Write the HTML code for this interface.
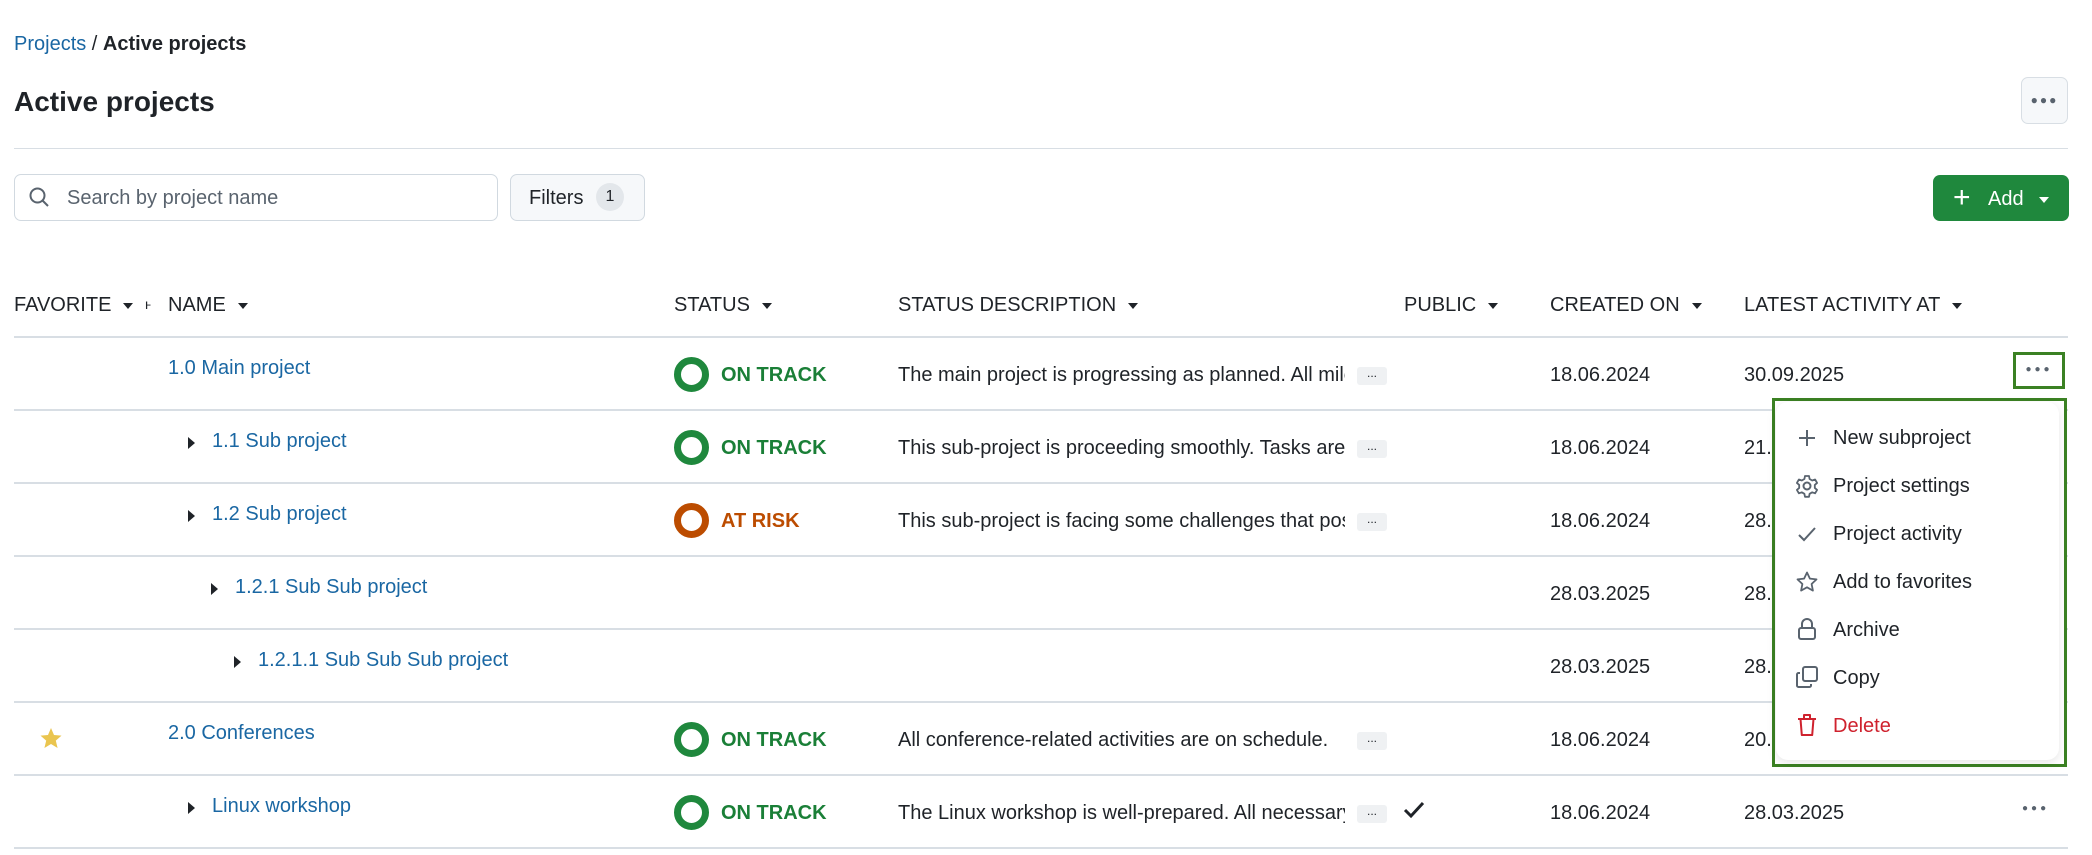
<!DOCTYPE html>
<html><head><meta charset="utf-8"><style>
*{box-sizing:border-box;margin:0;padding:0}
body{width:2092px;height:855px;background:#fff;font-family:"Liberation Sans",sans-serif;color:#1f2328;font-size:20px;position:relative;overflow:hidden}
.a{position:absolute;white-space:nowrap}
.link{color:#1a67a3}
.hl{position:absolute;left:14px;width:2054px;height:2px;background:#d8dee4}
.caret{display:inline-block;width:0;height:0;border-left:5px solid transparent;border-right:5px solid transparent;border-top:6px solid #1f2328;vertical-align:middle;margin-left:12px}
.tri{position:absolute;width:0;height:0;border-top:6px solid transparent;border-bottom:6px solid transparent;border-left:7px solid #1f2328}
.ring{position:absolute;width:35px;height:35px;border-radius:50%;border:7px solid #1f883d}
.ring.r{border-color:#bc4c00}
.st{font-weight:bold;color:#1a7f37}
.st.r{color:#bc4c00}
.badge{position:absolute;width:30px;height:18px;background:#eff1f3;border-radius:3px;font-size:12px;text-align:center;line-height:12px;color:#1f2328}
.mi{position:absolute;left:1833px;font-size:20px;color:#1f2328}
</style></head><body>
<div class="a" style="left:14px;top:33px"><span class="link">Projects</span> / <b>Active projects</b></div>
<div class="a" style="left:14px;top:86px;font-size:28px;font-weight:bold">Active projects</div>
<div class="a" style="left:2021px;top:77px;width:47px;height:47px;border:1px solid #d8dee4;border-radius:7px;background:#f6f8fa;text-align:center;line-height:44px;font-size:12px;color:#59636e;letter-spacing:2px">●●●</div>
<div class="hl" style="top:148px;height:1px"></div>

<div class="a" style="left:14px;top:174px;width:484px;height:47px;border:1px solid #d1d9e0;border-radius:7px"></div>
<svg class="a" style="left:29px;top:187px" width="20" height="22" viewBox="0 0 20 22"><circle cx="8.5" cy="8.5" r="7" fill="none" stroke="#59636e" stroke-width="2"/><path d="M13.5 13.5L19 19" stroke="#59636e" stroke-width="2"/></svg>
<div class="a" style="left:67px;top:187px;color:#59636e">Search by project name</div>
<div class="a" style="left:510px;top:174px;width:135px;height:47px;border:1px solid #d1d9e0;border-radius:7px;background:#f6f8fa"></div>
<div class="a" style="left:529px;top:187px">Filters</div>
<div class="a" style="left:596px;top:183px;width:28px;height:28px;border-radius:50%;background:#e3e7eb;text-align:center;line-height:28px;font-size:16px">1</div>

<div class="a" style="left:1933px;top:175px;width:136px;height:46px;border-radius:7px;background:#1f883d;color:#fff"></div>
<div class="a" style="left:1953px;top:181px;color:#fff;font-size:30px;font-weight:300">+</div>
<div class="a" style="left:1988px;top:188px;color:#fff;font-size:20px">Add</div>
<div class="a" style="left:2039px;top:197px;border-left:5px solid transparent;border-right:5px solid transparent;border-top:6px solid #fff"></div>

<!-- headers -->
<div class="a" style="left:14px;top:294px">FAVORITE<span class="caret"></span></div>
<div class="a" style="left:145px;top:296px;font-size:14px">ⱶ</div>
<div class="a" style="left:168px;top:294px">NAME<span class="caret"></span></div>
<div class="a" style="left:674px;top:294px">STATUS<span class="caret"></span></div>
<div class="a" style="left:898px;top:294px">STATUS DESCRIPTION<span class="caret"></span></div>
<div class="a" style="left:1404px;top:294px">PUBLIC<span class="caret"></span></div>
<div class="a" style="left:1550px;top:294px">CREATED ON<span class="caret"></span></div>
<div class="a" style="left:1744px;top:294px">LATEST ACTIVITY AT<span class="caret"></span></div>

<div class="hl" style="top:336px"></div>
<div class="hl" style="top:409px"></div>
<div class="hl" style="top:482px"></div>
<div class="hl" style="top:555px"></div>
<div class="hl" style="top:628px"></div>
<div class="hl" style="top:701px"></div>
<div class="hl" style="top:774px"></div>
<div class="hl" style="top:847px"></div>

<!-- row1 -->
<div class="a link" style="left:168px;top:357px">1.0 Main project</div>
<div class="ring" style="left:674px;top:357px"></div><div class="a st" style="left:721px;top:364px">ON TRACK</div>
<div class="a" style="left:898px;top:364px;width:447px;overflow:hidden">The main project is progressing as planned. All milestones</div>
<div class="badge" style="left:1357px;top:367px">...</div>
<div class="a" style="left:1550px;top:364px">18.06.2024</div>
<div class="a" style="left:1744px;top:364px">30.09.2025</div>
<div class="a" style="left:2013px;top:352px;width:52px;height:37px;border:3px solid #3b8123;text-align:center;line-height:30px;font-size:10px;color:#59636e;letter-spacing:3px">●●●</div>

<!-- row2 -->
<div class="tri" style="left:188px;top:437px"></div>
<div class="a link" style="left:212px;top:430px">1.1 Sub project</div>
<div class="ring" style="left:674px;top:430px"></div><div class="a st" style="left:721px;top:437px">ON TRACK</div>
<div class="a" style="left:898px;top:437px;width:447px;overflow:hidden">This sub-project is proceeding smoothly. Tasks are</div>
<div class="badge" style="left:1357px;top:440px">...</div>
<div class="a" style="left:1550px;top:437px">18.06.2024</div>
<div class="a" style="left:1744px;top:437px">21.</div>

<!-- row3 -->
<div class="tri" style="left:188px;top:510px"></div>
<div class="a link" style="left:212px;top:503px">1.2 Sub project</div>
<div class="ring r" style="left:674px;top:503px"></div><div class="a st r" style="left:721px;top:510px">AT RISK</div>
<div class="a" style="left:898px;top:510px;width:447px;overflow:hidden">This sub-project is facing some challenges that pose</div>
<div class="badge" style="left:1357px;top:513px">...</div>
<div class="a" style="left:1550px;top:510px">18.06.2024</div>
<div class="a" style="left:1744px;top:510px">28.</div>

<!-- row4 -->
<div class="tri" style="left:211px;top:583px"></div>
<div class="a link" style="left:235px;top:576px">1.2.1 Sub Sub project</div>
<div class="a" style="left:1550px;top:583px">28.03.2025</div>
<div class="a" style="left:1744px;top:583px">28.</div>

<!-- row5 -->
<div class="tri" style="left:234px;top:656px"></div>
<div class="a link" style="left:258px;top:649px">1.2.1.1 Sub Sub Sub project</div>
<div class="a" style="left:1550px;top:656px">28.03.2025</div>
<div class="a" style="left:1744px;top:656px">28.</div>

<!-- row6 -->
<svg class="a" style="left:39px;top:726px" width="24" height="24" viewBox="0 0 24 24"><path d="M12 2l3 7 7.5.6-5.7 5 1.8 7.4L12 18l-6.6 4 1.8-7.4-5.7-5L9 9z" fill="#eac54f"/></svg>
<div class="a link" style="left:168px;top:722px">2.0 Conferences</div>
<div class="ring" style="left:674px;top:722px"></div><div class="a st" style="left:721px;top:729px">ON TRACK</div>
<div class="a" style="left:898px;top:729px;width:447px;overflow:hidden">All conference-related activities are on schedule.</div>
<div class="badge" style="left:1357px;top:732px">...</div>
<div class="a" style="left:1550px;top:729px">18.06.2024</div>
<div class="a" style="left:1744px;top:729px">20.</div>

<!-- row7 -->
<div class="tri" style="left:188px;top:802px"></div>
<div class="a link" style="left:212px;top:795px">Linux workshop</div>
<div class="ring" style="left:674px;top:795px"></div><div class="a st" style="left:721px;top:802px">ON TRACK</div>
<div class="a" style="left:898px;top:802px;width:447px;overflow:hidden">The Linux workshop is well-prepared. All necessary</div>
<div class="badge" style="left:1357px;top:805px">...</div>
<svg class="a" style="left:1403px;top:801px" width="22" height="18" viewBox="0 0 22 18"><path d="M2 9l6 6L20 2" fill="none" stroke="#1f2328" stroke-width="3"/></svg>
<div class="a" style="left:1550px;top:802px">18.06.2024</div>
<div class="a" style="left:1744px;top:802px">28.03.2025</div>
<div class="a" style="left:2022px;top:803px;font-size:10px;color:#59636e;letter-spacing:3px">●●●</div>

<!-- menu -->
<div class="a" style="left:1772px;top:398px;width:295px;height:369px;border:3px solid #3b8123;background:#fff"></div>
<div class="a" style="left:1776px;top:402px;width:283px;height:358px;border-radius:12px;background:#fff;box-shadow:0 3px 10px rgba(0,0,0,.1)"></div>
<svg class="a" style="left:1796px;top:427px" width="22" height="22" viewBox="0 0 22 22"><path d="M11 3v16M3 11h16" stroke="#59636e" stroke-width="2"/></svg>
<div class="mi" style="top:427px">New subproject</div>
<svg class="a" style="left:1795px;top:474px" width="24" height="24" viewBox="0 0 24 24"><circle cx="12" cy="12" r="3.5" fill="none" stroke="#59636e" stroke-width="2"/><path d="M10 2h4l.6 3 2.6 1.5 2.9-1 2 3.4-2.3 2v3l2.3 2-2 3.4-2.9-1-2.6 1.5-.6 3h-4l-.6-3-2.6-1.5-2.9 1-2-3.4 2.3-2v-3l-2.3-2 2-3.4 2.9 1L9.4 5z" fill="none" stroke="#59636e" stroke-width="1.8" stroke-linejoin="round"/></svg>
<div class="mi" style="top:475px">Project settings</div>
<svg class="a" style="left:1796px;top:523px" width="22" height="22" viewBox="0 0 22 22"><path d="M3 12l5 5L19 5" fill="none" stroke="#59636e" stroke-width="2"/></svg>
<div class="mi" style="top:523px">Project activity</div>
<svg class="a" style="left:1795px;top:570px" width="24" height="24" viewBox="0 0 24 24"><path d="M12 2.5l2.9 6.1 6.6.8-4.9 4.6 1.3 6.6L12 17.3l-5.9 3.3 1.3-6.6-4.9-4.6 6.6-.8z" fill="none" stroke="#59636e" stroke-width="1.8" stroke-linejoin="round"/></svg>
<div class="mi" style="top:571px">Add to favorites</div>
<svg class="a" style="left:1797px;top:617px" width="20" height="24" viewBox="0 0 20 24"><path d="M5 11V7a5 5 0 0 1 10 0v4" fill="none" stroke="#59636e" stroke-width="2"/><rect x="2" y="11" width="16" height="11" rx="2" fill="none" stroke="#59636e" stroke-width="2"/></svg>
<div class="mi" style="top:619px">Archive</div>
<svg class="a" style="left:1795px;top:665px" width="24" height="24" viewBox="0 0 24 24"><rect x="8" y="2" width="14" height="14" rx="2" fill="none" stroke="#59636e" stroke-width="2"/><path d="M5 8H3.5A1.5 1.5 0 0 0 2 9.5v11A1.5 1.5 0 0 0 3.5 22h11a1.5 1.5 0 0 0 1.5-1.5V19" fill="none" stroke="#59636e" stroke-width="2"/></svg>
<div class="mi" style="top:667px">Copy</div>
<svg class="a" style="left:1797px;top:713px" width="20" height="24" viewBox="0 0 20 24"><path d="M1 6h18M7 6V2h6v4M3.5 6l1.3 16h10.4l1.3-16" fill="none" stroke="#cf222e" stroke-width="2" stroke-linejoin="round"/></svg>
<div class="mi" style="top:715px;color:#cf222e">Delete</div>
</body></html>
